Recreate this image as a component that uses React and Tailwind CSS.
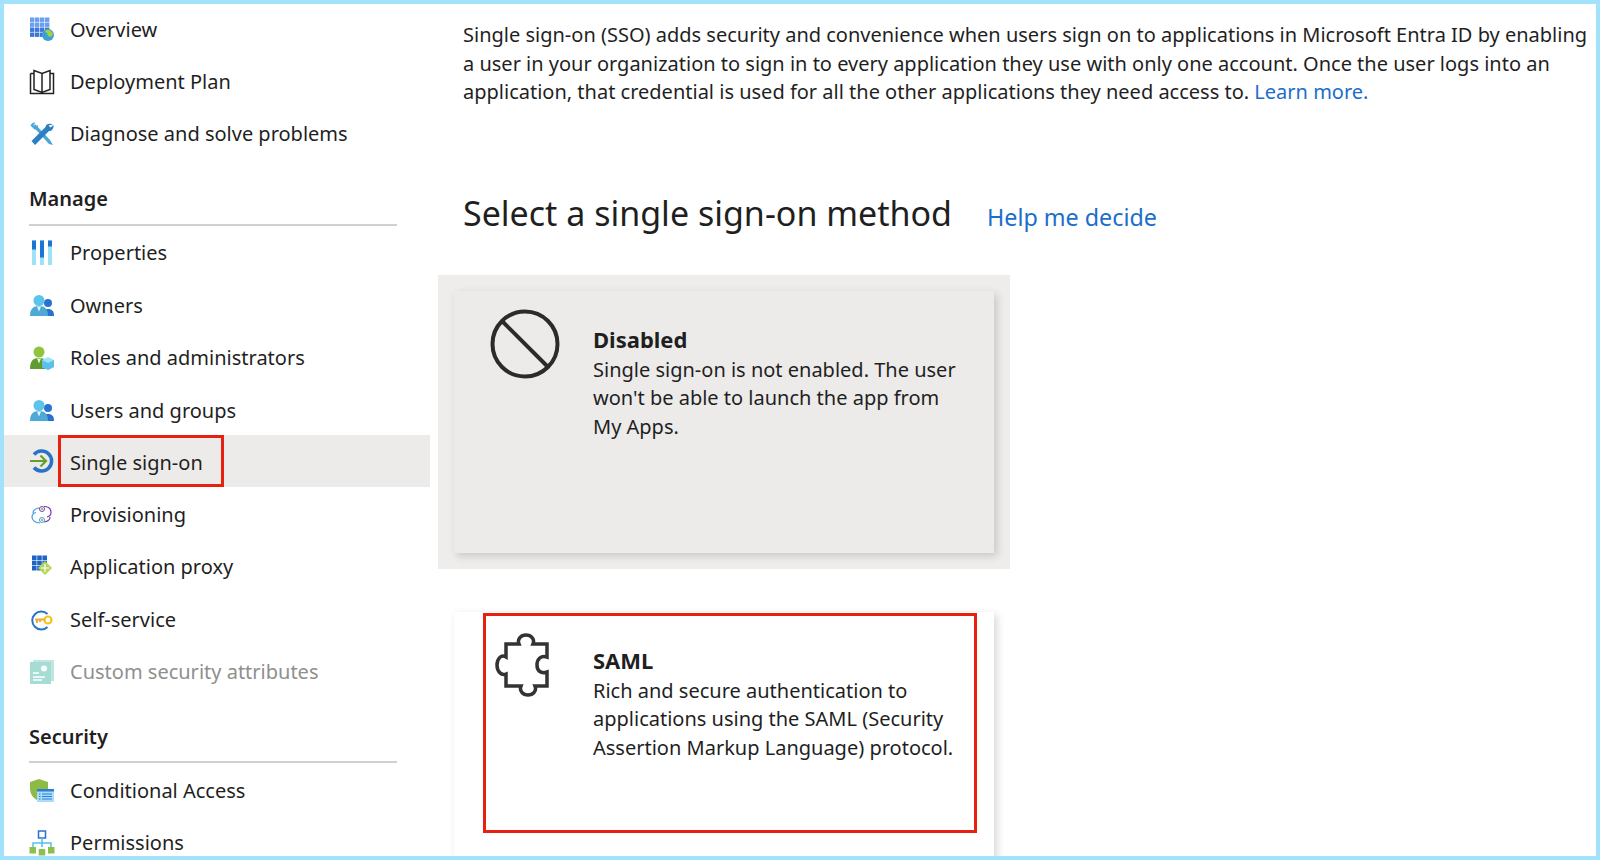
import React from 'react';

const Ico = ({ children }) => (
  <svg width="26" height="26" viewBox="0 0 26 26" className="shrink-0">{children}</svg>
);

const OverviewIcon = () => (
  <Ico>
    {[0, 1, 2, 3].map((r) =>
      [0, 1, 2, 3].map((c) => (
        <rect key={`${r}${c}`} x={1 + c * 5} y={0.5 + r * 5} width="4.4" height="4.4" fill={r < 2 ? '#6a9ff0' : '#3c78d8'} />
      ))
    )}
    <circle cx="19" cy="18" r="6" fill="#3aa0d8" />
    <path d="M17 13c3-1 6 1 7 4l-2 3-3-1-1-3-2-1z" fill="#a4cf3c" />
  </Ico>
);

const BookIcon = () => (
  <Ico>
    <path d="M1.500 4.500V24.500H24.500V4.500H21 M5 4.500H1.500" fill="none" stroke="#222" strokeWidth="1.500" />
    <path d="M5 1.500L13 4.500L21 1.500V20.500L13 23.500L5 20.500Z M13 4.500V23.500" fill="#fff" stroke="#222" strokeWidth="1.500" />
  </Ico>
);

const WrenchIcon = () => (
  <Ico>
    <path d="M6 3l15 16 3 5-4-1L4.500 6z" fill="#4ba6d6" />
    <path d="M24 3.500c-3-1.500-7-1-7.500 2.500L2.500 20 6 24l14-14c3 .5 5-3 4.500-6l-3 2.500-2-2z" fill="#2c7fc4" />
    <path d="M1.500 4.500c.5-2 3-3.500 5-3l-2 2.500 2 2L9 4c.5 2-1 5-3.500 4.500z" fill="#4ba6d6" />
  </Ico>
);

const BarsIcon = () => (
  <Ico>
    <rect x="3" y="0.500" width="4" height="24.500" fill="#9fe2f5" />
    <rect x="3" y="0.500" width="4" height="9" fill="#1c74d4" />
    <rect x="11" y="0.500" width="4" height="24.500" fill="#9fe2f5" />
    <rect x="11" y="0.500" width="4" height="17" fill="#1c74d4" />
    <rect x="19" y="0.500" width="4" height="24.500" fill="#9fe2f5" />
    <rect x="19" y="0.500" width="4" height="6" fill="#1c74d4" />
  </Ico>
);

const PeopleIcon = () => (
  <Ico>
    <circle cx="19" cy="10" r="4" fill="#2a72d0" />
    <path d="M13 23c0-5 2-7 6-7s6 2 6 7z" fill="#2a72d0" />
    <circle cx="10" cy="7.500" r="5.500" fill="#5cc4ea" />
    <path d="M1 23c0-7 3-10 9-10s9 3 9 10z" fill="#4fa9d6" />
    <path d="M8 13.500l2 5 2-5z" fill="#e8f6fc" />
  </Ico>
);

const RoleIcon = () => (
  <Ico>
    <circle cx="10" cy="7" r="5.500" fill="#8fc43c" />
    <path d="M1 24c0-8 3-11 9-11s9 3 9 11z" fill="#5f9b30" />
    <path d="M8 13.500l2 5 2-5z" fill="#e8f3d8" />
    <path d="M19 12l6 3v7l-6 3-6-3v-7z" fill="#9fe3f7" />
    <path d="M13 15l6 3 6-3v7l-6 3-6-3z" fill="#5cc0ea" />
  </Ico>
);

const SsoIcon = () => (
  <Ico>
    <path d="M5 6.500A10 10 0 1 1 5 19.500" fill="none" stroke="#2a72c8" strokeWidth="3.500" />
    <path d="M1 13h16M11.500 7.500L17 13l-5.500 5.500" fill="none" stroke="#66a02c" strokeWidth="2.200" />
  </Ico>
);

const ProvisionIcon = () => (
  <Ico>
    <path d="M15 4.500c5 0 7 3 7 6 0 3-2 4-4 4.500M15 20c4-.5 6-2 6-5" fill="none" stroke="#7a3fb0" strokeWidth="1.200" />
    <path d="M11 21c-5 0-8-3-8-6 0-3 2-4 4-4.500M11 6C7 6 4 8 4 11" fill="none" stroke="#3f9bdc" strokeWidth="1.200" />
    <circle cx="13" cy="7" r="2.500" fill="#fff" stroke="#7a3fb0" />
    <circle cx="13" cy="7" r="1.100" fill="#7fb83a" />
    <circle cx="13" cy="18" r="2.500" fill="#fff" stroke="#3f9bdc" />
    <circle cx="13" cy="18" r="1.100" fill="#7fb83a" />
  </Ico>
);

const ProxyIcon = () => (
  <Ico>
    {[0, 1, 2].map((r) =>
      [0, 1, 2].map((c) => (
        <rect key={`${r}${c}`} x={3 + c * 5.200} y={1.500 + r * 5.200} width="4.600" height="4.600" fill="#1f64c4" />
      ))
    )}
    <path d="M16 7l7 7-7 7-7-7z" fill="#b6d45c" />
    <path d="M16 10v8M12 14h8" stroke="#fff" strokeWidth="1.200" />
  </Ico>
);

const KeyIcon = () => (
  <Ico>
    <path d="M18.500 7A9 9 0 1 0 18.500 20" fill="none" stroke="#2a72c8" strokeWidth="2" />
    <circle cx="19" cy="13" r="3.500" fill="#fff" stroke="#f5c518" strokeWidth="2.200" />
    <path d="M6 12.500h10M8 12.500v3.500M11 12.500v2.500" fill="none" stroke="#f0a93a" strokeWidth="2" />
  </Ico>
);

const AttrIcon = () => (
  <Ico>
    <rect x="4" y="1" width="21" height="21" fill="#bfe6df" />
    <rect x="1" y="3" width="21" height="22" fill="#a6dcd3" />
    <circle cx="15" cy="9.500" r="3" fill="#fff" />
    <path d="M4 14h6M4 18h12M4 21h9" stroke="#fff" strokeWidth="1.300" />
  </Ico>
);

const AccessIcon = () => (
  <Ico>
    <path d="M10 1l9 3v6c0 7-4 11-9 13C5 21 1 17 1 10V4z" fill="#8dbb45" />
    <rect x="8" y="11" width="17" height="13" fill="#a9ddfa" />
    <rect x="8" y="11" width="17" height="2.500" fill="#2a7fd4" />
    <path d="M10 16h1.500M10 18.500h1.500M10 21h1.500M13 16h10M13 18.500h10M13 21h10" stroke="#2a7fd4" strokeWidth="1" />
  </Ico>
);

const PermIcon = () => (
  <Ico>
    <rect x="9.500" y="1" width="7" height="7" fill="#fff" stroke="#2a72d0" strokeWidth="1.500" />
    <path d="M13 8v9M4 17v-4h18v4" fill="none" stroke="#56c0ea" strokeWidth="1.500" />
    <rect x="0.500" y="17" width="6.500" height="6.500" fill="#8cc04a" />
    <rect x="9.700" y="19" width="6.500" height="6.500" fill="#8cc04a" />
    <rect x="19" y="17" width="6.500" height="6.500" fill="#8cc04a" />
  </Ico>
);

const Row = ({ icon, label, muted }) => (
  <div className="h-[52.4px] pt-[3px] flex items-center gap-[15px] pl-[25px]">
    {icon}
    <span className={`text-[20px] leading-none ${muted ? 'text-[#8f8f8f]' : 'text-[#1f1f1f]'}`}>{label}</span>
  </div>
);

const SectionTitle = ({ children }) => (
  <div className="ml-[25px] mr-[33px] mt-[27px] h-[39.5px] border-b-2 border-[#d0d0d0] text-[20px] leading-[26px] font-semibold text-[#1f1f1f]">
    {children}
  </div>
);

const Sidebar = () => (
  <aside className="w-[426px] shrink-0 -mt-[2px]">
    <Row icon={<OverviewIcon />} label="Overview" />
    <Row icon={<BookIcon />} label="Deployment Plan" />
    <Row icon={<WrenchIcon />} label="Diagnose and solve problems" />
    <SectionTitle>Manage</SectionTitle>
    <Row icon={<BarsIcon />} label="Properties" />
    <Row icon={<PeopleIcon />} label="Owners" />
    <Row icon={<RoleIcon />} label="Roles and administrators" />
    <Row icon={<PeopleIcon />} label="Users and groups" />
    <div className="h-[52px] flex items-center gap-[3px] pl-[25px] bg-[#edebe9]">
      <SsoIcon />
      <span className="h-full flex items-center pt-[4px] pl-[9px] w-[166px] border-[3px] border-[#e8200f] text-[20px] leading-none text-[#1f1f1f]">
        Single sign-on
      </span>
    </div>
    <Row icon={<ProvisionIcon />} label="Provisioning" />
    <Row icon={<ProxyIcon />} label="Application proxy" />
    <Row icon={<KeyIcon />} label="Self-service" />
    <Row icon={<AttrIcon />} label="Custom security attributes" muted />
    <SectionTitle>Security</SectionTitle>
    <Row icon={<AccessIcon />} label="Conditional Access" />
    <Row icon={<PermIcon />} label="Permissions" />
  </aside>
);

const Card = ({ icon, title, children, className }) => (
  <div className={`w-[540px] flex shadow-[3px_3px_8px_rgba(0,0,0,0.16)] ${className}`}>
    <div className="w-[139px] shrink-0">{icon}</div>
    <div className="pt-[34px] pr-4 text-[20px] leading-[28.6px] text-[#1f1f1f]">
      <div className="font-bold text-[22px] leading-[29px] mb-[2px]">{title}</div>
      {children}
    </div>
  </div>
);

const BanIcon = () => (
  <svg width="70" height="70" viewBox="0 0 70 70" className="ml-[36px] mt-[18px]">
    <circle cx="35" cy="35" r="32.500" fill="none" stroke="#2b2b2b" strokeWidth="4" />
    <path d="M12 12l46 46" stroke="#2b2b2b" strokeWidth="4" />
  </svg>
);

const PuzzleIcon = () => (
  <svg width="55" height="65" viewBox="0 0 55 65" className="ml-[41px] mt-[21px]">
    <path
      d="M11 11H24C22 6 26 2 31 2C36 2 40 6 38 11H52V24C46 22 42 26 42 32C42 38 46 41 52 39V53H40C42 58 38 62 33 62C28 62 24 58 26 53H11V41C6 43 2 38 2 32C2 26 6 21 11 24Z"
      fill="none"
      stroke="#333"
      strokeWidth="3.500"
    />
  </svg>
);

export default function App() {
  return (
    <div
      className="w-[1600px] h-[860px] border-4 border-[#a3e2fb] bg-white flex overflow-hidden"
      style={{ fontFamily: '"Noto Sans", sans-serif' }}
    >
      <Sidebar />
      <main className="flex-1 min-w-0 pl-[33px] pt-[17px]">
        <p className="text-[20px] leading-[28.6px] text-[#1f1f1f] whitespace-nowrap">
          Single sign-on (SSO) adds security and convenience when users sign on to applications in Microsoft Entra ID by enabling
          <br />
          a user in your organization to sign in to every application they use with only one account. Once the user logs into an
          <br />
          application, that credential is used for all the other applications they need access to.{' '}
          <span className="text-[#1b6ec9]">Learn more.</span>
        </p>
        <div className="mt-[82px] flex items-baseline gap-[35px]">
          <h1 className="text-[34px] leading-[48px] text-[#1f1f1f]">Select a single sign-on method</h1>
          <span className="text-[23.3px] text-[#1b6ec9]">Help me decide</span>
        </div>
        <div className="mt-[38px] -ml-[25px] w-[572px] h-[294px] bg-[#eeedec] pl-[16px] pt-[16px]">
          <Card icon={<BanIcon />} title="Disabled" className="h-[262px] bg-[#ecebea]">
            <div>
              Single sign-on is not enabled. The user
              <br />
              won't be able to launch the app from
              <br />
              My Apps.
            </div>
          </Card>
        </div>
        <div className="relative mt-[43px]">
          <Card icon={<PuzzleIcon />} title="SAML" className="-ml-[9px] h-[260px] bg-white">
            <div>
              Rich and secure authentication to
              <br />
              applications using the SAML (Security
              <br />
              Assertion Markup Language) protocol.
            </div>
          </Card>
          <div className="absolute left-[20px] top-[1px] w-[494px] h-[220px] border-[3px] border-[#e8200f]" />
        </div>
      </main>
    </div>
  );
}
